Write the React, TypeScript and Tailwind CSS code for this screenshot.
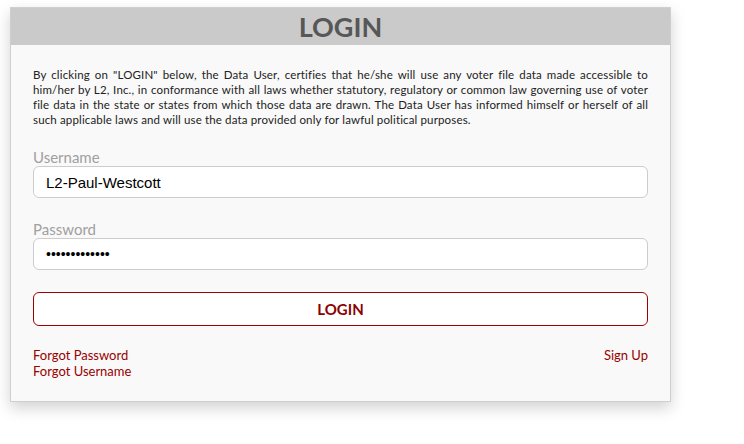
const lines = [
  'By clicking on "LOGIN" below, the Data User, certifies that he/she will use any voter file data made accessible to',
  'him/her by L2, Inc., in conformance with all laws whether statutory, regulatory or common law governing use of voter',
  'file data in the state or states from which those data are drawn. The Data User has informed himself or herself of all',
];

export default function App() {
  return (
    <div className="min-h-screen bg-white pt-[7px] pl-[10px]" style={{ fontFamily: 'Lato, "Noto Sans", sans-serif' }}>
      <div className="w-[661px] border border-[#cfcfcf] bg-[#f9f9f9] shadow-[0_6px_14px_rgba(0,0,0,0.18)]">
        <div className="h-[37px] bg-[#cacaca] flex items-center justify-center">
          <h1 className="text-[27px] font-bold leading-none text-[#575757]">LOGIN</h1>
        </div>

        <div className="px-[22px] pt-[22px] pb-[22px]">
          <div className="text-[11.5px] leading-[15px] tracking-[0.15px] text-[#222]">
            {lines.map((l) => (
              <div key={l} className="text-justify [text-align-last:justify] whitespace-nowrap">
                {l}
              </div>
            ))}
            <div>such applicable laws and will use the data provided only for lawful political purposes.</div>
          </div>

          <label className="block mt-[21px] text-[15px] leading-[18px] text-[#a0a0a0]">Username</label>
          <input
            type="text"
            defaultValue="L2-Paul-Westcott"
            className="block w-full h-[32px] rounded-[6px] border border-[#cccccc] bg-white px-[12px] text-[15px] text-black outline-none"
            style={{ fontFamily: '"Liberation Sans", Arial, sans-serif' }}
          />

          <label className="block mt-[22px] text-[15px] leading-[18px] text-[#a0a0a0]">Password</label>
          <input
            type="password"
            defaultValue="abcdefghijklm"
            className="block w-full h-[32px] rounded-[6px] border border-[#cccccc] bg-white px-[12px] text-[14px] text-black outline-none"
            style={{ fontFamily: '"Liberation Sans", Arial, sans-serif' }}
          />

          <button className="mt-[22px] w-full h-[34px] rounded-[6px] border border-[#a00000] bg-white text-[15px] font-bold text-[#8b0000]">
            LOGIN
          </button>

          <div className="mt-[21px] flex justify-between text-[13px] leading-[16px] text-[#990000]">
            <div className="flex flex-col">
              <a href="#">Forgot Password</a>
              <a href="#">Forgot Username</a>
            </div>
            <a href="#">Sign Up</a>
          </div>
        </div>
      </div>
    </div>
  );
}
